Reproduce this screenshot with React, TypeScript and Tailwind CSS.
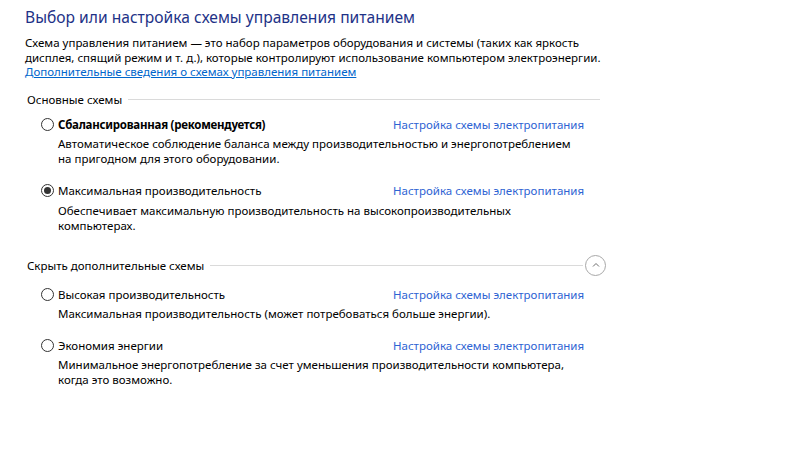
import React from "react";

const LINK = "Настройка схемы электропитания";

function Radio({ checked }: { checked?: boolean }) {
  return (
    <span className="flex h-[13px] w-[13px] shrink-0 items-center justify-center rounded-full border border-[#333333] bg-white">
      {checked && <span className="h-[7px] w-[7px] rounded-full bg-[#333333]" />}
    </span>
  );
}

function Plan({
  label,
  bold,
  checked,
  desc,
  descMt,
}: {
  label: string;
  bold?: boolean;
  checked?: boolean;
  desc: React.ReactNode;
  descMt: string;
}) {
  return (
    <div>
      <div className="flex h-[15px] items-center pl-[16px] leading-[15px]">
        <Radio checked={checked} />
        <span className={`ml-[4px] w-[335px] ${bold ? "font-bold tracking-[-0.25px]" : ""}`}>{label}</span>
        <span className="text-[#2e63d3]">{LINK}</span>
      </div>
      <div className={`pl-[33px] leading-[15px] ${descMt}`}>{desc}</div>
    </div>
  );
}

export default function App() {
  return (
    <div
      className="h-[455px] w-[800px] overflow-hidden bg-white pl-[25px] text-[11.5px] text-black"
      style={{ fontFamily: '"Noto Sans", "Open Sans", sans-serif' }}
    >
      <h1 className="mt-[8px] text-[15.6px] leading-[18px] text-[#1e3287]">
        Выбор или настройка схемы управления питанием
      </h1>
      <p className="mt-[10px] leading-[14.5px]">
        Схема управления питанием — это набор параметров оборудования и системы (таких как яркость
        <br />
        дисплея, спящий режим и т. д.), которые контролируют использование компьютером электроэнергии.
        <br />
        <span className="text-[#0066cc] underline">Дополнительные сведения о схемах управления питанием</span>
      </p>

      <div className="mt-[12px] flex h-[15px] w-[575px] items-center pl-[2px] leading-[15px]">
        <span>Основные схемы</span>
        <span className="ml-[6px] h-px flex-1 bg-[#dadada]" />
      </div>

      <div className="mt-[10px]">
        <Plan
          label="Сбалансированная (рекомендуется)"
          bold
          descMt="mt-[4px]"
          desc={
            <>
              Автоматическое соблюдение баланса между производительностью и энергопотреблением
              <br />
              на пригодном для этого оборудовании.
            </>
          }
        />
      </div>
      <div className="mt-[17px]">
        <Plan
          label="Максимальная производительность"
          checked
          descMt="mt-[5px]"
          desc={
            <>
              Обеспечивает максимальную производительность на высокопроизводительных
              <br />
              компьютерах.
            </>
          }
        />
      </div>

      <div className="mt-[25px] flex h-[15px] w-[581px] items-center pl-[2px] leading-[15px]">
        <span>Скрыть дополнительные схемы</span>
        <span className="ml-[6px] h-px flex-1 bg-[#dadada]" />
        <span className="ml-[2px] flex h-[21px] w-[21px] shrink-0 items-center justify-center rounded-full border border-[#a8a8a8]">
          <svg width="10" height="10" viewBox="0 0 10 10" fill="none">
            <path d="M2 6.5 L5 3.5 L8 6.5" stroke="#6d6d6d" strokeWidth="1" />
          </svg>
        </span>
      </div>

      <div className="mt-[14px]">
        <Plan
          label="Высокая производительность"
          descMt="mt-[4px]"
          desc={<>Максимальная производительность (может потребоваться больше энергии).</>}
        />
      </div>
      <div className="mt-[17px]">
        <Plan
          label="Экономия энергии"
          descMt="mt-[4px]"
          desc={
            <>
              Минимальное энергопотребление за счет уменьшения производительности компьютера,
              <br />
              когда это возможно.
            </>
          }
        />
      </div>
    </div>
  );
}
